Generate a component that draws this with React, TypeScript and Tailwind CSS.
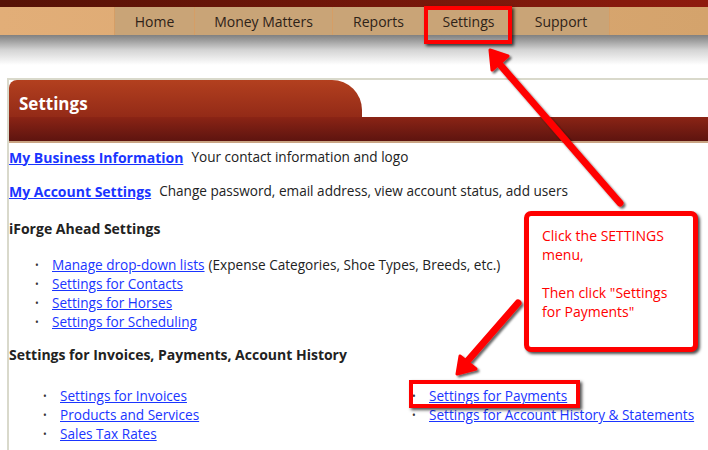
import React from "react";

const navItems = [
  { label: "Home", w: "w-[80px]" },
  { label: "Money Matters", w: "w-[138px]" },
  { label: "Reports", w: "w-[92px]" },
  { label: "Settings", w: "w-[88px]" },
  { label: "Support", w: "w-[97px]" },
];

function Bullet({ children }: { children: React.ReactNode }) {
  return (
    <li className="flex items-center h-[19px]">
      <span className="w-[17px] text-[10px] text-[#333]">•</span>
      {children}
    </li>
  );
}

function Link({ children, bold }: { children: React.ReactNode; bold?: boolean }) {
  return (
    <a className={`text-[#1a35ff] underline ${bold ? "font-bold text-[14px]" : ""}`} href="#">
      {children}
    </a>
  );
}

export default function App() {
  return (
    <div className="relative w-[708px] h-[450px] overflow-hidden bg-white text-[13.6px] text-[#222] font-['Open_Sans',sans-serif]">
      {/* top bar */}
      <div className="h-[7px] bg-gradient-to-r from-[#561206] to-[#8e1b0e]" />
      <nav className="h-[28px] flex bg-gradient-to-r from-[#e2ae78] to-[#d4a36c] text-[14px]">
        <div className="w-[114px]" />
        {navItems.map((n) => (
          <div
            key={n.label}
            className={`${n.w} flex items-center justify-center bg-[#c9a477] border-l border-[#d59e66] text-[#2e2218]`}
          >
            {n.label}
          </div>
        ))}
        <div className="flex-1 border-l border-[#d59e66]" />
      </nav>
      <div className="h-[30px] bg-gradient-to-b from-[#808080] via-[#d4d4d4] to-white" />
      <div className="h-[13px]" />

      {/* panel */}
      <div className="ml-[7px] border-t-2 border-l-2 border-[#d9d9cb] h-[380px]">
        <div className="flex">
          <div className="w-[353px] h-[37px] rounded-tl-[8px] rounded-tr-[30px] bg-gradient-to-b from-[#b3401f] to-[#932a17] flex items-center pt-[10px] pl-[10px] text-white font-bold text-[17px]">
            Settings
          </div>
        </div>
        <div className="h-[24px] bg-gradient-to-b from-[#8b2415] to-[#5e140f]" />
        <div className="h-[2px] bg-[#c9a483]" />

        <div className="pt-[2px]">
          <div className="h-[24px] flex items-center">
            <Link bold>My Business Information</Link>
            <span className="ml-[8px]">Your contact information and logo</span>
          </div>
          <div className="h-[10px]" />
          <div className="h-[24px] flex items-center">
            <Link bold>My Account Settings</Link>
            <span className="ml-[8px]">Change password, email address, view account status, add users</span>
          </div>
          <div className="h-[13px]" />
          <div className="h-[24px] flex items-center font-bold text-[14px]">iForge Ahead Settings</div>
          <ul className="mt-[16px] pl-[26px]">
            <Bullet>
              <Link>Manage drop-down lists</Link>
              <span className="ml-[4px]">(Expense Categories, Shoe Types, Breeds, etc.)</span>
            </Bullet>
            <Bullet>
              <Link>Settings for Contacts</Link>
            </Bullet>
            <Bullet>
              <Link>Settings for Horses</Link>
            </Bullet>
            <Bullet>
              <Link>Settings for Scheduling</Link>
            </Bullet>
          </ul>
          <div className="mt-[10px] h-[24px] flex items-center font-bold text-[14px]">
            Settings for Invoices, Payments, Account History
          </div>
          <div className="mt-[21px] flex">
            <ul className="w-[403px] pl-[34px]">
              <Bullet>
                <Link>Settings for Invoices</Link>
              </Bullet>
              <Bullet>
                <Link>Products and Services</Link>
              </Bullet>
              <Bullet>
                <Link>Sales Tax Rates</Link>
              </Bullet>
            </ul>
            <ul>
              <Bullet>
                <Link>Settings for Payments</Link>
              </Bullet>
              <Bullet>
                <Link>Settings for Account History &amp; Statements</Link>
              </Bullet>
            </ul>
          </div>
        </div>
      </div>

      {/* annotations */}
      <div className="absolute left-[424px] top-[6px] w-[88px] h-[38px] border-[4px] border-[#ff0000] shadow-[2px_2px_3px_rgba(0,0,0,0.7)]" />
      <div className="absolute left-[409px] top-[380px] w-[171px] h-[28px] border-[4px] border-[#ff0000] shadow-[2px_2px_3px_rgba(0,0,0,0.7)]" />

      <svg className="absolute left-0 top-0" width="708" height="450" viewBox="0 0 708 450">
        <defs>
          <filter id="sh" x="-20%" y="-20%" width="140%" height="140%">
            <feDropShadow dx="2" dy="2" stdDeviation="1.2" floodColor="#000" floodOpacity="0.6" />
          </filter>
        </defs>
        <g filter="url(#sh)" stroke="#ff0000" fill="#ff0000" strokeLinecap="round" strokeLinejoin="round">
          <line x1="620" y1="203" x2="496" y2="60" strokeWidth="7" />
          <polygon points="490,50 492,70 508,56" strokeWidth="3" />
          <line x1="518" y1="303" x2="464" y2="365" strokeWidth="7" />
          <polygon points="457,374 460,356 476,369" strokeWidth="3" />
        </g>
      </svg>

      <div className="absolute left-[524px] top-[211px] w-[174px] h-[141px] rounded-[7px] border-[5px] border-[#ff0000] bg-white shadow-[2px_2px_3px_rgba(0,0,0,0.7)] pl-[13px] pt-[10px] text-[#ff0000] text-[14px] leading-[19px]">
        <div>Click the SETTINGS</div>
        <div>menu,</div>
        <div className="h-[19px]" />
        <div>Then click "Settings</div>
        <div>for Payments"</div>
      </div>
    </div>
  );
}
